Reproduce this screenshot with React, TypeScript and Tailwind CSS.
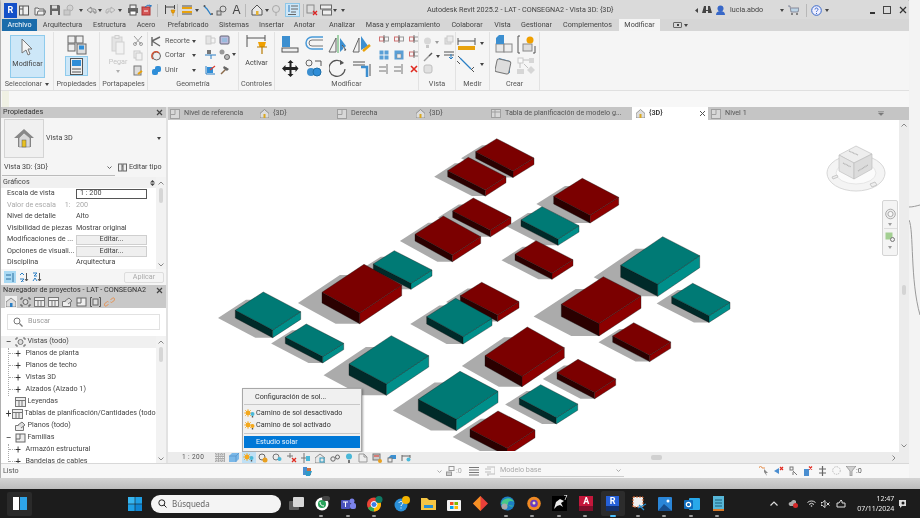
import React from "react";

type IcoProps = { w?: number; h?: number; vb?: string; c?: string; children?: React.ReactNode };

const Ico = ({ w = 12, h = 12, vb, c = "", children }: IcoProps) => (
  <svg width={w} height={h} viewBox={vb ?? `0 0 ${w} ${h}`} className={`shrink-0 ${c}`}>
    {children}
  </svg>
);

const Caret = ({ c = "" }: { c?: string }) => (
  <svg width="4" height="3" viewBox="0 0 4 3" className={`shrink-0 ${c}`}>
    <path d="M0 0h4L2 3z" fill="#444" />
  </svg>
);

const Sep = ({ c = "" }: { c?: string }) => <div className={`h-[13px] w-px shrink-0 bg-[#b8b8b8] ${c}`} />;

const TABS: [string, string][] = [
  ["Arquitectura", "w-[51px]"],
  ["Estructura", "w-[43px]"],
  ["Acero", "w-[30px]"],
  ["Prefabricado", "w-[54px]"],
  ["Sistemas", "w-[38px]"],
  ["Insertar", "w-[37px]"],
  ["Anotar", "w-[29px]"],
  ["Analizar", "w-[46px]"],
  ["Masa y emplazamiento", "w-[76px]"],
  ["Colaborar", "w-[52px]"],
  ["Vista", "w-[19px]"],
  ["Gestionar", "w-[49px]"],
  ["Complementos", "w-[53px]"],
];

const TitleBar = () => (
  <div className="flex h-[19px] shrink-0 items-center rounded-tr-[3px] bg-[#dadada] pl-[3px] pt-[1px]">
    <div className="flex h-[15px] w-[13px] shrink-0 items-center justify-center bg-[#1450c8] text-[9px] font-bold leading-none text-white">R</div>
    <Ico c="ml-[1px]" w={12} h={11} vb="0 0 12 11"><rect x="1.5" y="1" width="9" height="9" fill="#eee" stroke="#555" /><path d="M5 1v9M1.5 4h3.5" stroke="#555" /></Ico>
    <Ico c="ml-[4px]" w={12} h={11}><path d="M1 3h3l1 1h5v6H1z M3 10l1-4h8l-2 4" fill="#f0f0f0" stroke="#666" /></Ico>
    <Ico c="ml-[3px]" w={12} h={12}><path d="M1 1h9l1 1v9H1z" fill="#666" /><rect x="3" y="1.5" width="5" height="3" fill="#ddd" /><rect x="3" y="7" width="6" height="4" fill="#ddd" /></Ico>
    <Ico c="ml-[2px] opacity-50" w={13} h={12}><circle cx="7" cy="4" r="3" fill="#ccc" stroke="#888" /><rect x="1" y="6" width="6" height="5" fill="#bbb" stroke="#888" /></Ico>
    <Caret c="ml-[3px]" />
    <Ico c="ml-[3px]" w={11} h={9}><path d="M1 4l4-3v2h3a2 2 0 012 2v2H8V5H5v2z" fill="#ddd" stroke="#777" strokeWidth="0.8" /></Ico>
    <Caret c="ml-[1px]" />
    <Ico c="ml-[3px] opacity-50" w={11} h={9}><path d="M10 4L6 1v2H3a2 2 0 00-2 2v2h2V5h3v2z" fill="#ddd" stroke="#777" strokeWidth="0.8" /></Ico>
    <Caret c="ml-[2px]" />
    <Ico c="ml-[5px]" w={12} h={12}><rect x="3" y="1" width="6" height="4" fill="#eee" stroke="#555" /><rect x="1" y="4" width="10" height="5" fill="#666" /><rect x="3" y="7" width="6" height="4" fill="#fff" stroke="#555" /></Ico>
    <Ico c="ml-[2px]" w={12} h={12}><rect x="1" y="3" width="8" height="8" fill="#d65757" stroke="#a33" /><path d="M4 3l3-2 3 2M8 1l3 1" stroke="#2b79c2" fill="none" /><path d="M3 7h4" stroke="#fff" /></Ico>
    <Sep c="ml-[4px]" />
    <Ico c="ml-[6px]" w={12} h={13}><path d="M1.5 1v9M10.5 1v4M1.5 3h9" stroke="#444" fill="none" /><path d="M7 6h4l-1 3H8z M9 9v3" fill="#f0a000" stroke="#c78000" strokeWidth="0.6" /></Ico>
    <Sep c="ml-[1px]" />
    <Ico c="ml-[3px]" w={12} h={10}><rect x="1" y="2" width="10" height="2" fill="#e8a20c" /><rect x="1" y="6" width="10" height="2" fill="#e8a20c" /><path d="M1 1h10M1 9h10" stroke="#555" /></Ico>
    <Caret c="ml-[2px]" />
    <Ico c="ml-[4px]" w={11} h={12}><path d="M1 2l3 3 4 6" stroke="#2a7fc5" strokeWidth="1.3" fill="none" /><circle cx="1.5" cy="2" r="1" fill="#555" /><circle cx="9" cy="10" r="1" fill="#555" /></Ico>
    <Ico c="ml-[2px]" w={11} h={11}><circle cx="7" cy="4" r="3" fill="none" stroke="#666" /><rect x="1" y="6" width="4" height="4" fill="#ccc" stroke="#666" /></Ico>
    <div className="ml-[4px] w-[11px] text-center font-['Liberation_Sans',sans-serif] text-[12px] leading-none text-[#444]">A</div>
    <Sep c="ml-[3px]" />
    <Ico c="ml-[5px]" w={12} h={12}><path d="M1 6l5-5 5 5v5H1z" fill="#e8e8e8" stroke="#555" /><rect x="5" y="7" width="2.5" height="4" fill="#e4b232" /></Ico>
    <Caret c="ml-[2px]" />
    <Ico c="ml-[2px] opacity-50" w={10} h={12}><circle cx="5" cy="5" r="3.5" fill="none" stroke="#777" /><path d="M5 9v3" stroke="#777" /></Ico>
    <div className="ml-[4px] flex h-[14px] w-[15px] shrink-0 items-center justify-center border border-[#8ec7e8] bg-[#cde6f7]">
      <Ico w={11} h={10}><path d="M4 1h7M4 4h7M4 7h5M1 9.5h8" stroke="#666" /><path d="M2 0v7" stroke="#2a7fc5" /></Ico>
    </div>
    <Sep c="ml-[3px]" />
    <Ico c="ml-[2px]" w={12} h={12}><rect x="1" y="1" width="7" height="8" fill="#ddd" stroke="#888" /><path d="M7 7l4 4M11 7l-4 4" stroke="#d22" strokeWidth="1.3" /></Ico>
    <Ico c="ml-[2px]" w={12} h={12}><rect x="0.5" y="1" width="11" height="4" fill="#eee" stroke="#666" /><rect x="2.5" y="6" width="9" height="5" fill="#eee" stroke="#666" /></Ico>
    <Caret c="ml-[1px]" />
    <Caret c="ml-[4px]" />
    <div className="ml-[82px] w-[192px] shrink-0 whitespace-nowrap text-[7.2px] text-[#444]">Autodesk Revit 2025.2 - LAT - CONSEGNA2 - Vista 3D: {"{3D}"}</div>
    <Ico c="ml-[76px]" w={3} h={5}><path d="M3 0v5L0 2.5z" fill="#444" /></Ico>
    <Ico c="ml-[4px]" w={10} h={10}><path d="M2 1h2v4h2V1h2l2 7H6V6H4v2H0z" fill="#444" /></Ico>
    <Ico c="ml-[3px]" w={11} h={11}><circle cx="5.5" cy="3.5" r="3" fill="#3868c8" /><path d="M1 10c0-3 2-4 4.500-4s4.500 1 4.500 4z" fill="#3868c8" /></Ico>
    <div className="ml-[4px] w-[45px] shrink-0 text-[7.2px] text-[#444]">lucia.abdo</div>
    <Caret c="ml-[5px]" />
    <Ico c="ml-[4px]" w={11} h={10}><path d="M0 1h2l1 6h7l1-4H3" fill="#bcd4e6" stroke="#778" strokeWidth="0.8" /><circle cx="4" cy="9" r="1" fill="#666" /><circle cx="9" cy="9" r="1" fill="#666" /></Ico>
    <Sep c="ml-[7px]" />
    <Ico c="ml-[4px]" w={11} h={11}><circle cx="5.500" cy="5.500" r="4.800" fill="#eef" stroke="#3868c8" /><path d="M4 4.500c0-2 3-2 3 0 0 1-1.500 1-1.500 2.300M5.500 8v1" stroke="#3868c8" fill="none" /></Ico>
    <Caret c="ml-[3px]" />
    <div className="ml-[41px] mt-[6px] h-[1.5px] w-[5px] shrink-0 bg-[#333]" />
    <div className="ml-[8px] h-[8px] w-[8px] shrink-0 border border-[#444]" />
    <Ico c="ml-[8px]" w={8} h={8}><path d="M1 1l6 6M7 1L1 7" stroke="#333" strokeWidth="1.2" /></Ico>
  </div>
);

const RibbonTabs = () => (
  <div className="flex h-[12px] shrink-0 items-stretch bg-[#d6d6d6] text-[7.2px] text-[#444]">
    <div className="ml-[1px] flex w-[35px] items-center justify-center bg-[#1b6cab] pt-[1px] text-white">Archivo</div>
    {TABS.map(([t, w]) => (
      <div key={t} className={`flex items-center justify-center whitespace-nowrap pt-[1px] ${w}`}>{t}</div>
    ))}
    <div className="ml-[5px] flex w-[41px] items-center justify-center bg-[#f4f4f4] pt-[1px]">Modificar</div>
    <div className="ml-[13px] flex items-center gap-[2px]">
      <div className="flex h-[6px] w-[9px] items-center justify-center rounded-[1px] border border-[#666]"><div className="h-[2px] w-[2px] bg-[#444]" /></div>
      <Caret />
    </div>
  </div>
);

const Panel = ({ w, label, children }: { w: string; label: React.ReactNode; children?: React.ReactNode }) => (
  <div className={`flex shrink-0 flex-col border-r border-[#e2e2e2] ${w}`}>
    <div className="flex h-[47px] overflow-hidden">{children}</div>
    <div className="flex h-[11px] items-center justify-center text-[7.2px] text-[#555]">{label}</div>
  </div>
);

const RibbonRow = ({ icon, text, caret }: { icon: React.ReactNode; text: string; caret?: boolean }) => (
  <div className="flex h-[14.5px] items-center">
    {icon}
    <span className="ml-[3px] w-[27px] text-[7.2px] text-[#555]">{text}</span>
    {caret && <Caret />}
  </div>
);

const Mini = ({ kind }: { kind: string }) => {
  if (kind === "red") return <Ico w={10} h={10}><path d="M2 2l6 6M8 2L2 8" stroke="#e02a20" strokeWidth="1.6" /></Ico>;
  if (kind === "grid") return <Ico w={10} h={10}><rect x="0.5" y="0.5" width="4" height="4" fill="#5a9fd6" /><rect x="5.5" y="0.5" width="4" height="4" fill="#5a9fd6" /><rect x="0.5" y="5.5" width="4" height="4" fill="#5a9fd6" /><rect x="5.5" y="5.5" width="4" height="4" fill="#5a9fd6" /></Ico>;
  if (kind === "blue") return <Ico w={10} h={10}><rect x="0.5" y="0.5" width="9" height="9" fill="#5a9fd6" /><rect x="3" y="4" width="4" height="4" fill="#eee" stroke="#888" strokeWidth="0.5" /></Ico>;
  if (kind === "lines") return <Ico w={10} h={10}><path d="M0 3h7M0 7h7M8 0v10" stroke="#777" /></Ico>;
  return <Ico w={10} h={8}><rect x="0.5" y="2" width="4" height="4" fill="none" stroke="#d07070" /><rect x="5.5" y="2" width="4" height="4" fill="none" stroke="#999" /><path d="M5 0v8" stroke="#777" /></Ico>;
};

const Ribbon = () => (
  <div className="flex h-[59px] shrink-0 bg-[#f5f5f5] pt-[1px]">
    <Panel w="w-[53px]" label={<span className="flex items-center gap-[3px]">Seleccionar <Caret /></span>}>
      <div className="ml-[9px] mt-[3px] flex h-[43px] w-[35px] flex-col items-center border border-[#8fcbec] bg-[#cde7f8]">
        <Ico c="mt-[2px]" w={13} h={18}><path d="M1 1l10 10H7l2 5-2 1-2-5-4 3z" fill="#f4f4f4" stroke="#777" /></Ico>
        <span className="mt-[3px] text-[7.2px] text-[#444]">Modificar</span>
      </div>
    </Panel>
    <Panel w="w-[46px]" label="Propiedades">
      <div className="flex w-full flex-col items-center">
        <Ico c="mt-[3px]" w={20} h={20}><g fill="#eee" stroke="#666"><rect x="1" y="1" width="7" height="7" /><rect x="9" y="1" width="7" height="7" /><rect x="1" y="9" width="7" height="7" /></g><rect x="10" y="9" width="9" height="10" fill="#ddd" stroke="#666" /><rect x="12" y="10.5" width="5" height="4" fill="#2f8ed8" /></Ico>
        <div className="mt-[1px] flex h-[20px] w-[23px] items-center justify-center border border-[#8fcbec] bg-[#cde7f8]">
          <Ico w={13} h={17}><rect x="0.5" y="0.5" width="12" height="16" fill="#eee" stroke="#555" /><rect x="2" y="2" width="9" height="6" fill="#2f8ed8" /><path d="M2 11h9M2 14h9" stroke="#555" /></Ico>
        </div>
      </div>
    </Panel>
    <Panel w="w-[48px]" label="Portapapeles">
      <div className="ml-[7px] flex w-[22px] flex-col items-center opacity-40">
        <Ico c="mt-[3px]" w={14} h={20}><rect x="1" y="2" width="10" height="14" fill="#ccc" stroke="#999" /><rect x="4" y="0.5" width="4" height="3" fill="#ddd" stroke="#999" /><rect x="5" y="7" width="8" height="12" fill="#eee" stroke="#999" /></Ico>
        <span className="mt-[2px] text-[7.2px] text-[#777]">Pegar</span>
        <Caret c="mt-[2px]" />
      </div>
      <div className="ml-[4px] mt-[3px] flex flex-col items-center gap-[4px]">
        <Ico c="opacity-70" w={10} h={11}><path d="M1 1l7 8M9 1L2 9" stroke="#777" /><circle cx="2" cy="9" r="1.5" fill="none" stroke="#777" /><circle cx="8" cy="9" r="1.5" fill="none" stroke="#777" /></Ico>
        <Ico c="opacity-40" w={10} h={11}><rect x="1" y="1" width="6" height="7" fill="#eee" stroke="#888" /><rect x="3" y="3" width="6" height="7" fill="#eee" stroke="#888" /></Ico>
        <Ico w={10} h={11}><rect x="1" y="1" width="7" height="9" fill="#ddd" stroke="#777" /><path d="M5 9l4-3" stroke="#e8a20c" strokeWidth="2" /></Ico>
      </div>
    </Panel>
    <Panel w="w-[91px]" label="Geometría">
      <div className="ml-[3px] mt-[2px] flex w-[53px] shrink-0 flex-col">
        <RibbonRow caret text="Recorte" icon={<Ico w={11} h={11}><path d="M1 1v9M1 5l8-4M1 5l8 5" stroke="#666" strokeWidth="1.4" fill="none" /></Ico>} />
        <RibbonRow caret text="Cortar" icon={<Ico w={11} h={11}><circle cx="5.5" cy="6" r="4" fill="#eee" stroke="#666" /><path d="M2 9a4 4 0 016-6" stroke="#d45030" fill="none" strokeWidth="1.3" /></Ico>} />
        <RibbonRow caret text="Unir" icon={<Ico w={11} h={11}><rect x="4" y="1" width="6" height="6" rx="2" fill="#2f8ed8" /><rect x="1" y="4" width="6" height="6" rx="2" fill="#2f8ed8" /></Ico>} />
      </div>
      <div className="ml-[1px] mt-[3px] flex flex-col gap-[4px]">
        <Ico c="opacity-40" w={11} h={10}><rect x="1" y="1" width="5" height="8" fill="#ccc" stroke="#888" /><path d="M6 3h4v5H6" fill="none" stroke="#888" /></Ico>
        <Ico w={11} h={11}><rect x="2" y="1" width="4" height="4" fill="#777" /><path d="M0 6h11M6 6v4" stroke="#2a7fc5" /></Ico>
        <Ico w={11} h={11}><path d="M1 10V2M1 10h9" stroke="#2a7fc5" /><rect x="2" y="3" width="6" height="6" fill="#2f8ed8" /><path d="M5 6l5-4" stroke="#e04030" strokeWidth="1.3" /></Ico>
      </div>
      <div className="ml-[3px] mt-[3px] flex flex-col gap-[4px]">
        <Ico w={11} h={10}><rect x="1" y="1" width="9" height="8" rx="1" fill="#bbd" stroke="#667" /><rect x="3" y="3" width="5" height="4" fill="#9bd" /></Ico>
        <div className="flex items-center gap-[2px]"><Ico w={11} h={11}><circle cx="3" cy="3" r="2.5" fill="#999" /><circle cx="8" cy="8" r="2.5" fill="#bbb" stroke="#666" /></Ico><Caret /></div>
        <Ico w={11} h={11}><path d="M2 10l6-6" stroke="#8a6a4a" strokeWidth="1.5" /><path d="M5 2l5 3-2 2-4-3z" fill="#666" /></Ico>
      </div>
    </Panel>
    <Panel w="w-[36px]" label="Controles">
      <div className="flex w-full flex-col items-center">
        <Ico c="mt-[3px]" w={22} h={20}><path d="M1 0v12M19 0v6M1 3h18" stroke="#555" fill="none" /><path d="M12 7h8l-1.5 5h-5z" fill="#f0a000" /><path d="M11 12h10M16 12v7" stroke="#b87a00" strokeWidth="1.2" /></Ico>
        <span className="mt-[3px] text-[7.2px] text-[#444]">Activar</span>
      </div>
    </Panel>
    <Panel w="w-[144px]" label="Modificar">
      <div className="ml-[3px] mt-[3px] grid w-[96px] shrink-0 grid-cols-[24px_24px_24px_24px] grid-rows-[22px_22px]">
        <div className="flex justify-center"><Ico w={18} h={18}><rect x="1" y="1" width="8" height="11" fill="#3c8fd0" /><rect x="1" y="13" width="16" height="4" fill="#eee" stroke="#555" /></Ico></div>
        <div className="flex justify-center"><Ico w={20} h={16}><path d="M19 2H8a6 6 0 000 12h11" fill="none" stroke="#4a9ad8" strokeWidth="1.5" /><path d="M19 5H8a3 3 0 000 6h11" fill="none" stroke="#777" /></Ico></div>
        <div className="flex justify-center"><Ico w={20} h={18}><path d="M8 3v14H1z" fill="#f2f2f2" stroke="#666" /><path d="M10 0v18" stroke="#4fae5f" /><path d="M12 3v14l6-6z" fill="#3c8fd0" /><path d="M14 10l4 5-2 0" stroke="#555" fill="#eee" /></Ico></div>
        <div className="flex justify-center"><Ico w={20} h={18}><path d="M7 3v14H1z" fill="#f2f2f2" stroke="#666" /><path d="M9 1v14l7-4z" fill="#3c8fd0" /><path d="M11 16l7-6" stroke="#e8a20c" strokeWidth="2.5" /></Ico></div>
        <div className="flex items-center justify-center"><Ico w={17} h={17}><path d="M8.500 0l3 3h-2v4h4V5l3 3.500-3 3.500v-2h-4v4h2l-3 3-3-3h2v-4h-4v2L0 8.500l3.500-3.500v2h4V3h-2z" fill="#222" /></Ico></div>
        <div className="flex items-center justify-center"><Ico w={18} h={18}><circle cx="4" cy="4" r="3" fill="#f2f2f2" stroke="#666" /><path d="M10 2h6M16 2v5" stroke="#555" fill="none" /><circle cx="6" cy="13" r="4" fill="#3c8fd0" /><circle cx="12" cy="13" r="4" fill="#2f8ed8" stroke="#1f6fa8" /></Ico></div>
        <div className="flex items-center justify-center"><Ico w={18} h={18}><path d="M14 4A8 8 0 1016 10" fill="none" stroke="#555" strokeWidth="1.2" /><path d="M11 1l4 3-4 2" fill="#555" /></Ico></div>
        <div className="flex items-center justify-center"><Ico w={20} h={18}><path d="M1 3h12M1 6h12" stroke="#555" /><path d="M9 8h6v10" stroke="#3c8fd0" strokeWidth="2.500" fill="none" /><path d="M18 5v12" stroke="#555" /></Ico></div>
      </div>
      <div className="ml-[2px] mt-[3px] grid grid-cols-[15px_15px_15px] grid-rows-[14.5px_14.5px_14.5px] justify-items-center">
        <Mini kind="pair" /><Mini kind="pair" /><Mini kind="pair" />
        <Mini kind="grid" /><Mini kind="blue" /><Mini kind="pair" />
        <Mini kind="lines" /><Mini kind="lines" /><Mini kind="red" />
      </div>
    </Panel>
    <Panel w="w-[37px]" label="Vista">
      <div className="ml-[4px] mt-[3px] grid grid-cols-[21px_10px] grid-rows-[14.5px_14.5px_14.5px]">
        <div className="flex items-center gap-[3px] opacity-50"><Ico w={9} h={11}><circle cx="4.500" cy="4" r="3.500" fill="#bbb" /><rect x="3" y="8" width="3" height="3" fill="#999" /></Ico><Caret /></div>
        <Ico c="opacity-40" w={10} h={10}><rect x="1" y="3" width="6" height="6" fill="#ccc" stroke="#888" /><rect x="3" y="1" width="6" height="6" fill="#ddd" stroke="#888" /></Ico>
        <div className="flex items-center gap-[3px]"><Ico w={10} h={10}><path d="M1 9l5-5" stroke="#999" strokeWidth="1.500" /><path d="M6 4l3-3" stroke="#555" strokeWidth="1.500" /></Ico><Caret /></div>
        <Ico w={10} h={10}><path d="M0 2h10M0 5h10" stroke="#555" /><path d="M7 4v5M5 7l2 2 2-2" stroke="#2a7fc5" fill="none" /></Ico>
        <Ico c="opacity-50" w={10} h={10}><rect x="1" y="1" width="8" height="8" rx="2" fill="#ccc" stroke="#888" /></Ico>
      </div>
    </Panel>
    <Panel w="w-[34px]" label="Medir">
      <div className="mt-[3px] flex flex-col gap-[3px] pl-[1px]">
        <div className="flex items-center gap-[4px]"><Ico w={19} h={17}><path d="M1 3v7M18 3v7M1 6h17" stroke="#555" /><rect x="1" y="11" width="17" height="4" fill="#e8a20c" /></Ico><Caret /></div>
        <div className="flex items-center gap-[4px]"><Ico w={19} h={18}><path d="M1 1l8 8 8 8" stroke="#555" /><path d="M3 3l11 11" stroke="#2a7fc5" strokeWidth="1.200" /><path d="M3 9L0 6M17 12l-3 3" stroke="#555" /></Ico><Caret /></div>
      </div>
    </Panel>
    <Panel w="w-[50px]" label="Crear">
      <div className="ml-[3px] mt-[3px] grid grid-cols-[23px_20px] grid-rows-[22px_22px] justify-items-center">
        <Ico w={19} h={18}><rect x="1" y="9" width="8" height="8" fill="#e8e8e8" stroke="#888" /><rect x="9" y="9" width="8" height="8" fill="#eee" stroke="#888" /><path d="M1 9V3l3-3h5v9z" fill="#3c8fd0" /></Ico>
        <Ico w={19} h={19}><path d="M3 1H1v17h2M16 18h2v-7" stroke="#555" fill="none" /><rect x="6" y="9" width="9" height="7" fill="#ddd" stroke="#888" /><circle cx="13" cy="5" r="3.500" fill="#f0a000" /></Ico>
        <Ico w={20} h={18}><path d="M4 1l11 3v12L4 13z" fill="#3c8fd0" /><rect x="1" y="3" width="14" height="13" rx="2" fill="#ddd" stroke="#777" transform="rotate(12 8 9)" /></Ico>
        <Ico c="opacity-40" w={18} h={18}><rect x="1" y="1" width="5" height="5" fill="#fff" stroke="#888" /><rect x="12" y="1" width="5" height="5" fill="#aaa" /><path d="M6 3h6M3 6v5M7 7l4 4" stroke="#777" /><rect x="0" y="12" width="7" height="5" fill="#aaa" /><path d="M14 9l4 4-4 4-4-4z" fill="#aaa" /></Ico>
      </div>
    </Panel>
  </div>
);

const OptionsBar = () => (
  <div className="flex h-[17px] shrink-0 border-t border-[#e0e0e0] bg-[#f7f7f7]">
    <div className="ml-[1px] h-full w-[7px] bg-[#f0f1e4]" />
  </div>
);

const PropRow = ({ l, v, c = "" }: { l: string; v: React.ReactNode; c?: string }) => (
  <div className={`flex h-[11.5px] items-center ${c}`}>
    <div className="w-[75px] shrink-0 whitespace-pre pl-[6px]">{l}</div>
    <div className="flex-1">{v}</div>
  </div>
);

const EditBtn = () => (
  <div className="flex h-[10.5px] w-[71px] items-center justify-center border border-[#cfcfcf] bg-[#efefef]">Editar...</div>
);

const PanelHead = ({ t }: { t: string }) => (
  <div className="flex h-[11px] shrink-0 items-center justify-between bg-[#c8c8c8] pl-[2px] pr-[3px] text-[7.2px] text-[#333]">
    <span className="whitespace-nowrap">{t}</span>
    <Ico w={7} h={7}><path d="M1 1l5 5M6 1L1 6" stroke="#444" strokeWidth="1.200" /></Ico>
  </div>
);

const VScroll = ({ thumb }: { thumb: string }) => (
  <div className="flex w-[10px] shrink-0 flex-col items-center bg-[#f2f2f2] pt-[4px]">
    <Ico w={6} h={4}><path d="M0.500 3.500L3 1l2.500 2.500" stroke="#888" fill="none" /></Ico>
    <div className={`mt-[3px] w-[4px] rounded-[2px] bg-[#d6d6d6] ${thumb}`} />
    <Ico c="mb-[2px] mt-auto" w={6} h={4}><path d="M0.500 0.500L3 3l2.500-2.500" stroke="#888" fill="none" /></Ico>
  </div>
);

const Properties = () => (
  <div className="flex h-[178px] shrink-0 flex-col bg-[#f5f5f5] text-[7.2px] text-[#444]">
    <PanelHead t="Propiedades" />
    <div className="flex h-[40px] shrink-0 items-center">
      <div className="ml-[3px] flex h-[39px] w-[40px] items-center justify-center border border-[#d4d4d4] bg-[#f0f0f0]">
        <Ico w={22} h={22}><path d="M1 11L11 2l10 9-3 0v9H5v-9z" fill="#888" /><path d="M6 11l5-5 6 5v9H6z" fill="#d8d8d8" stroke="#777" strokeWidth="0.500" /><rect x="9" y="13" width="4" height="7" fill="#e8c020" stroke="#555" strokeWidth="0.500" /></Ico>
      </div>
      <span className="ml-[2px] flex-1">Vista 3D</span>
      <Caret c="mr-[5px]" />
    </div>
    <div className="flex h-[19px] shrink-0 items-center">
      <div className="ml-[1px] mt-[1px] flex h-[15px] w-[113px] items-center justify-between border-b border-[#bbb] pl-[2px] pr-[3px]">
        <span>Vista 3D: {"{3D}"}</span>
        <Ico w={5} h={3}><path d="M0.500 0.500L2.500 2.500l2-2" stroke="#666" fill="none" /></Ico>
      </div>
      <Ico c="ml-[3px]" w={9} h={9}><rect x="0.500" y="1" width="3.500" height="7" fill="#eee" stroke="#666" /><rect x="5" y="1" width="3.500" height="7" fill="#eee" stroke="#666" /><path d="M4 3h1" stroke="#666" /></Ico>
      <span className="ml-[2px] whitespace-nowrap">Editar tipo</span>
    </div>
    <div className="flex min-h-0 flex-1">
      <div className="min-w-0 flex-1 bg-white">
        <div className="flex h-[11px] items-center justify-between bg-[#f0f0f0] pl-[2px] pr-[1px]">
          <span>Gráficos</span>
          <Ico w={5} h={6}><path d="M0 2.500L2.500 0 5 2.500zM0 3.500L2.500 6 5 3.500z" fill="#444" /></Ico>
        </div>
        <PropRow l="Escala de vista" v={<div className="flex h-[10.500px] w-[71px] items-center border border-[#555] pl-[3px]">1 : 200</div>} />
        <PropRow c="text-[#aaa]" l="Valor de escala     1:" v="200" />
        <PropRow l="Nivel de detalle" v="Alto" />
        <PropRow l="Visibilidad de piezas" v="Mostrar original" />
        <PropRow l="Modificaciones de ..." v={<EditBtn />} />
        <PropRow l="Opciones de visuali..." v={<EditBtn />} />
        <PropRow l="Disciplina" v="Arquitectura" />
      </div>
      <VScroll thumb="h-[15px]" />
    </div>
    <div className="flex h-[16px] shrink-0 items-center pl-[3px]">
      <div className="flex h-[12px] w-[12px] items-center justify-center bg-[#a9d9f3]"><Ico w={9} h={9}><path d="M0 2h5M0 6h5" stroke="#2a6f9f" /><path d="M7 0v9" stroke="#2a6f9f" /></Ico></div>
      <Ico c="ml-[3px]" w={10} h={10}><path d="M7.500 1v8M6 7l1.500 2L9 7" stroke="#555" fill="none" /><path d="M1 3l2-2 2 2M1 7h4l-3 3h3" stroke="#2a7fc5" fill="none" /></Ico>
      <Ico c="ml-[3px]" w={10} h={10}><path d="M7.500 1v8M6 7l1.500 2L9 7" stroke="#555" fill="none" /><path d="M1 1h4L2 4h3M1 9l2-3 2 3" stroke="#2a7fc5" fill="none" /></Ico>
      <div className="ml-auto mr-[2px] flex h-[11px] w-[40px] items-center justify-center rounded-[2px] border border-[#ddd] text-[#aaa]">Aplicar</div>
    </div>
  </div>
);

const TreeRow = ({ t, icon, sign, indent = "pl-[15px]", hi }: { t: string; icon?: React.ReactNode; sign?: string; indent?: string; hi?: boolean }) => (
  <div className={`flex h-[12px] shrink-0 items-center whitespace-nowrap ${indent} ${hi ? "bg-[#f0f0f0]" : ""}`}>
    {sign && <span className="w-[7px] shrink-0 text-center text-[10px] leading-none text-[#333]">{sign}</span>}
    {icon}
    <span className="ml-[1.5px]">{t}</span>
  </div>
);

// dotted guide of the tree: the children hang on a vertical line with a tick per row
const TreeChild = ({ t }: { t: string }) => (
  <div className="flex h-[12px] shrink-0 items-center whitespace-nowrap">
    <div className="h-0 w-[6px] shrink-0 border-t border-dotted border-[#aaa]" />
    <span className="w-[7px] shrink-0 text-center text-[10px] leading-none text-[#333]">+</span>
    <span className="ml-[4px]">{t}</span>
  </div>
);

const SheetIco = ({ c = "#777" }: { c?: string }) => (
  <Ico w={11} h={10}><rect x="0.500" y="0.500" width="10" height="9" fill="#eee" stroke={c} /><path d="M0.500 3.500h10M4 3.500v6M7 3.500v6" stroke={c} /></Ico>
);

const Browser = () => (
  <div className="flex min-h-0 flex-1 flex-col bg-white text-[7.2px] text-[#444]">
    <PanelHead t="Navegador de proyectos - LAT - CONSEGNA2" />
    <div className="flex h-[12px] shrink-0 items-center gap-[3px] bg-[#c8c8c8] pl-[4px]">
      <div className="flex h-[12px] w-[12px] items-center justify-center bg-[#efefef]"><Ico w={10} h={10}><path d="M0 5l5-4 5 4v5H0z" fill="#ddd" stroke="#666" strokeWidth="0.700" /><rect x="4" y="6" width="2.500" height="4" fill="#2a7fc5" /></Ico></div>
      <Ico w={11} h={10}><path d="M1 3V1h2M8 1h2v2M10 7v2H8M3 9H1V7" stroke="#555" fill="none" /><circle cx="5.500" cy="5" r="2.500" fill="#ddd" stroke="#666" /></Ico>
      <SheetIco /><SheetIco />
      <Ico w={11} h={10}><path d="M0.500 4.500h8v5h-8z" fill="#eee" stroke="#777" /><path d="M3 4l4-3 3 3-4 3" fill="#ddd" stroke="#777" /></Ico>
      <Ico w={11} h={10}><rect x="1" y="1" width="9" height="8" fill="#eee" stroke="#666" /><path d="M5 1v5H1" stroke="#666" fill="none" /></Ico>
      <Ico w={11} h={10}><path d="M2 .500H.500v9H2M9 .500h1.500v9H9" stroke="#555" fill="none" /><rect x="3" y="2" width="5" height="6" fill="#ddd" stroke="#666" /></Ico>
      <Ico w={11} h={10}><path d="M4.500 7l-2 2a1.500 1.500 0 01-2-2l2-2a1.500 1.500 0 012 0M6.500 3l2-2a1.500 1.500 0 012 2l-2 2a1.500 1.500 0 01-2 0" stroke="#e59050" fill="none" /></Ico>
    </div>
    <div className="flex h-[27.500px] shrink-0 items-center px-[6px]">
      <div className="flex h-[16px] flex-1 items-center border border-[#e2e2e2] pl-[5px]">
        <Ico w={10} h={10}><circle cx="4" cy="4" r="3" fill="none" stroke="#777" /><path d="M6.500 6.500L9.500 9.500" stroke="#777" strokeWidth="1.200" /></Ico>
        <span className="ml-[5px] text-[#9a9a9a]">Buscar</span>
      </div>
    </div>
    <div className="flex min-h-0 flex-1">
      <div className="min-w-0 flex-1 overflow-hidden">
        <TreeRow hi indent="pl-[4px]" sign="−" t="Vistas (todo)" icon={<Ico c="ml-[3px]" w={11} h={10}><path d="M1 3V1h2M8 1h2v2M10 7v2H8M3 9H1V7" stroke="#666" fill="none" /><circle cx="5.500" cy="5" r="2.500" fill="#ddd" stroke="#777" /></Ico>} />
        <div className="ml-[6.500px] border-l border-dotted border-[#aaa]">
          <TreeChild t="Planos de planta" />
          <TreeChild t="Planos de techo" />
          <TreeChild t="Vistas 3D" />
          <TreeChild t="Alzados (Alzado 1)" />
        </div>
        <TreeRow indent="pl-[14px]" t="Leyendas" icon={<SheetIco />} />
        <TreeRow indent="pl-[4px]" sign="+" t="Tablas de planificación/Cantidades (todo" icon={<SheetIco />} />
        <TreeRow indent="pl-[14px]" t="Planos (todo)" icon={<Ico w={11} h={10}><path d="M0.500 4.500h8v5h-8z" fill="#eee" stroke="#777" /><path d="M3 4l4-3 3 3-4 3" fill="#ddd" stroke="#777" /></Ico>} />
        <TreeRow indent="pl-[4px]" sign="−" t="Familias" icon={<Ico c="ml-[3px]" w={11} h={10}><rect x="1" y="1" width="9" height="8" fill="#eee" stroke="#666" /><path d="M5 1v5H1" stroke="#666" fill="none" /></Ico>} />
        <div className="ml-[6.500px] border-l border-dotted border-[#aaa]">
          <TreeChild t="Armazón estructural" />
          <TreeChild t="Bandejas de cables" />
        </div>
      </div>
      <VScroll thumb="h-[15px]" />
    </div>
  </div>
);

type Box = { k: "r" | "t"; a: number[]; r: number[]; l: number[]; h: number };

const BOXES: Box[] = [
  { k: "r", a: [496.7, 138.7], r: [534, 158], l: [475.7, 151.7], h: 6.5 },
  { k: "r", a: [468.3, 157.3], r: [506, 176.7], l: [447.7, 170.7], h: 6 },
  { k: "r", a: [473.3, 198], r: [511, 217.3], l: [452.7, 211], h: 6.5 },
  { k: "r", a: [443.3, 216], r: [480.7, 236.7], l: [415, 234.3], h: 6.7 },
  { k: "t", a: [394.3, 250.7], r: [432, 270], l: [373.3, 264], h: 6 },
  { k: "r", a: [364, 264.3], r: [401.7, 285], l: [322, 292.3], h: 10.7 },
  { k: "t", a: [263.3, 292], r: [300.7, 311.7], l: [235.3, 310.3], h: 7.7 },
  { k: "t", a: [306.3, 324], r: [343.7, 343.3], l: [285.3, 337.3], h: 6.3 },
  { k: "r", a: [481.7, 282.3], r: [519, 301.7], l: [460.3, 295.7], h: 6.3 },
  { k: "t", a: [455.7, 298.3], r: [492, 318.3], l: [426.7, 316.7], h: 7.3 },
  { k: "t", a: [391.3, 335.7], r: [428.7, 355.7], l: [349, 364], h: 11.3 },
  { k: "r", a: [527.3, 327], r: [564.3, 347.7], l: [485, 355.7], h: 10.3 },
  { k: "t", a: [460, 371.3], r: [498, 391.3], l: [418.3, 399.3], h: 11.3 },
  { k: "t", a: [540.7, 384.7], r: [577.7, 404], l: [519.3, 398.3], h: 6.3 },
  { k: "r", a: [498, 411], r: [535, 430], l: [470, 429.3], h: 7.7 },
  { k: "r", a: [578, 359.3], r: [615.7, 379], l: [557, 372.7], h: 6.3 },
  { k: "r", a: [603.3, 276.7], r: [641, 296], l: [561.3, 304.3], h: 12.3 },
  { k: "t", a: [662.7, 236.7], r: [699.7, 255.7], l: [620.7, 265.3], h: 12 },
  { k: "t", a: [692.7, 283.3], r: [730, 302.3], l: [671.7, 296.7], h: 6.7 },
  { k: "r", a: [633.7, 322.7], r: [670.7, 342], l: [612.7, 336], h: 6.3 },
  { k: "r", a: [582.3, 178.3], r: [618.7, 197.3], l: [553.7, 196.3], h: 7.7 },
  { k: "t", a: [542, 206.7], r: [579, 225.7], l: [521, 220], h: 6.3 },
  { k: "r", a: [536, 240.7], r: [573, 259.7], l: [515, 254.3], h: 6 },
];

const COL = {
  r: { top: "#7b0000", right: "#8c0000", left: "#2b0000" },
  t: { top: "#007a75", right: "#008f8a", left: "#002a29" },
};

const pts = (...p: number[][]) => p.map((q) => q.join(",")).join(" ");

const Model = () => (
  <svg width={731} height={331} viewBox="168 120 731 331" className="block">
    {BOXES.map((b, i) => {
      const f = [b.r[0] + b.l[0] - b.a[0], b.r[1] + b.l[1] - b.a[1]];
      const dx = -2.25 * b.h;
      const low = (q: number[]) => [q[0], q[1] + b.h];
      const sh = (q: number[]) => [q[0] + dx, q[1] + b.h];
      return <polygon key={i} points={pts(low(b.a), sh(b.a), sh(b.l), sh(f), low(f))} fill="#ababab" />;
    })}
    {BOXES.map((b, i) => {
      const f = [b.r[0] + b.l[0] - b.a[0], b.r[1] + b.l[1] - b.a[1]];
      const low = (q: number[]) => [q[0], q[1] + b.h];
      const c = COL[b.k];
      return (
        <g key={i} stroke="#111" strokeWidth="0.35" strokeLinejoin="round">
          <polygon points={pts(b.l, f, low(f), low(b.l))} fill={c.left} />
          <polygon points={pts(b.r, f, low(f), low(b.r))} fill={c.right} />
          <polygon points={pts(b.a, b.r, f, b.l)} fill={c.top} />
        </g>
      );
    })}
  </svg>
);

const ViewCube = () => (
  <svg width={64} height={48} viewBox="0 0 64 48" className="absolute right-[11px] top-[25px]">
    <ellipse cx="32" cy="28" rx="29" ry="18" fill="#f4f4f4" stroke="#d8d8d8" />
    <ellipse cx="32" cy="28" rx="20" ry="11" fill="#fbfbfb" stroke="#e6e6e6" />
    <path d="M8 32l5-2 1 2-5 2zM46 39l5-2 2 3-5 2z" fill="#eee" stroke="#c8c8c8" />
    <path d="M32 1l16 8-18 9-15-8z" fill="#eee" stroke="#bbb" strokeWidth="0.600" />
    <path d="M15 10l15 8v16l-15-8z" fill="#e4e4e4" stroke="#bbb" strokeWidth="0.600" />
    <path d="M30 18l18-9v15l-18 10z" fill="#dcdcdc" stroke="#bbb" strokeWidth="0.600" />
    <path d="M25 6l9 4M19 18l8 4M34 26l10-6" stroke="#b0b0b0" strokeWidth="1.200" strokeDasharray="1 0.500" />
  </svg>
);

const NavBar = () => (
  <div className="absolute right-[1px] top-[80px] flex h-[56px] w-[16px] flex-col items-center rounded-[2px] border border-[#d4d4d4] bg-[#f4f4f4] pt-[7px]">
    <Ico w={11} h={12}><circle cx="5.500" cy="6" r="4.800" fill="#eee" stroke="#aaa" /><circle cx="5.500" cy="6" r="2.600" fill="#f8f8f8" stroke="#aaa" /></Ico>
    <Caret c="mt-[3px] opacity-50" />
    <div className="mt-[2px] h-px w-[13px] bg-[#ddd]" />
    <Ico c="mt-[3px]" w={11} h={11}><rect x="0.500" y="0.500" width="7" height="7" fill="#a3cf92" /><circle cx="7.500" cy="7.500" r="2" fill="#eee" stroke="#777" /></Ico>
    <Caret c="mt-[3px] opacity-50" />
  </div>
);

const ViewBarIcon = ({ children, active }: { children: React.ReactNode; active?: boolean }) => (
  <div className={`flex h-[11px] w-[14.300px] shrink-0 items-center justify-center ${active ? "bg-[#bfe0f5]" : ""}`}>{children}</div>
);

const SunBulb = ({ bulb = "#4ab8d8" }: { bulb?: string }) => (
  <Ico w={11} h={9}><path d="M4 0v8M0 4h8M1 1l6 6M7 1L1 7" stroke="#f4a81c" strokeWidth="0.700" /><circle cx="4" cy="4" r="2.400" fill="#f4a81c" /><circle cx="8.500" cy="5" r="2" fill={bulb} /><rect x="7.800" y="7" width="1.400" height="1.500" fill="#555" /></Ico>
);

const ViewBar = () => (
  <div className="flex h-[11px] shrink-0 items-center bg-[#ececec] text-[6.5px] text-[#555]">
    <div className="ml-[14px] w-[31px] shrink-0 tracking-[0.4px]">1 : 200</div>
    <div className="flex">
      <ViewBarIcon><Ico w={10} h={9}><rect width="10" height="9" fill="#aaa" /><path d="M0 2h10M0 4.500h10M0 7h10M2 0v9M5 0v9M8 0v9" stroke="#eee" strokeDasharray="1 1" /></Ico></ViewBarIcon>
      <ViewBarIcon><Ico w={10} h={9}><path d="M0 3l3-3h7v6l-3 3H0z" fill="#7ab8e8" /><path d="M0 3h7v6M7 3l3-3" stroke="#4a88c0" fill="none" strokeWidth="0.600" /></Ico></ViewBarIcon>
      <ViewBarIcon active><SunBulb /></ViewBarIcon>
      <ViewBarIcon><Ico w={10} h={10}><circle cx="4" cy="4" r="3" fill="#eee" stroke="#666" /><circle cx="7" cy="7" r="2.500" fill="#e8a020" /></Ico></ViewBarIcon>
      <ViewBarIcon><Ico w={10} h={10}><circle cx="4" cy="4" r="3" fill="none" stroke="#777" /><circle cx="7.500" cy="6" r="2" fill="#4ab8d8" /></Ico></ViewBarIcon>
      <ViewBarIcon><Ico w={10} h={10}><path d="M3 0v5M0 3h6" stroke="#777" /><path d="M5 5l4 4M9 5L5 9" stroke="#e02a20" strokeWidth="1.300" /></Ico></ViewBarIcon>
      <ViewBarIcon><Ico w={10} h={10}><path d="M3 0v10M0 5h6" stroke="#777" /><rect x="5" y="3" width="4" height="5" fill="#4ab8d8" /></Ico></ViewBarIcon>
      <ViewBarIcon><Ico w={10} h={10}><path d="M0 5l5-4 5 4v5H0z" fill="#e8e8e8" stroke="#666" strokeWidth="0.700" /><rect x="5" y="5" width="4" height="4" fill="none" stroke="#2a9ac0" /></Ico></ViewBarIcon>
      <ViewBarIcon><Ico w={10} h={8}><ellipse cx="3" cy="5" rx="2.200" ry="2.200" fill="none" stroke="#666" /><ellipse cx="7.500" cy="3" rx="2" ry="2" fill="none" stroke="#666" /></Ico></ViewBarIcon>
      <ViewBarIcon><Ico w={8} h={10}><circle cx="4" cy="3.500" r="3" fill="#4ab8d8" /><rect x="3" y="7" width="2" height="3" fill="#777" /></Ico></ViewBarIcon>
      <ViewBarIcon><Ico w={10} h={10}><path d="M1 1h5l3 3v5H1z" fill="#eee" stroke="#999" /><path d="M6 1v3h3" stroke="#999" fill="none" /></Ico></ViewBarIcon>
      <ViewBarIcon><Ico w={10} h={10}><rect x="1" y="1" width="7" height="6" fill="#ccc" stroke="#777" /><path d="M2 3h5" stroke="#e02a20" /><circle cx="8" cy="8" r="2" fill="#e8a020" /></Ico></ViewBarIcon>
      <ViewBarIcon><Ico w={10} h={10}><path d="M1 5l3-3h5v4H5z" fill="#3c8fd0" /><rect x="1" y="5" width="4" height="4" fill="#eee" stroke="#777" /></Ico></ViewBarIcon>
      <ViewBarIcon><Ico w={10} h={10}><path d="M1 2v6M9 2v3M1 3h8" stroke="#666" fill="none" /><circle cx="7.500" cy="6.500" r="2" fill="#4ab8d8" /></Ico></ViewBarIcon>
    </div>
    <div className="flex flex-1 items-center justify-end">
      <div className="mr-[230px] h-[5px] w-[11px] rounded-[2px] bg-[#d0d0d0]" />
      <Ico c="mr-[3px]" w={4} h={6}><path d="M.500 .500L3 3 .500 5.500" stroke="#888" fill="none" /></Ico>
    </div>
  </div>
);

const DocTab = ({ w, icon, t, c = "" }: { w: string; icon?: React.ReactNode; t: string; c?: string }) => (
  <div className={`flex h-full shrink-0 items-center gap-[4px] whitespace-nowrap ${w} ${c}`}>
    {icon}
    <span>{t}</span>
  </div>
);

const TabHouse = () => <Ico w={9} h={9}><path d="M0 4.500L4.500 .500 9 4.500V9H0z" fill="#ddd" stroke="#777" strokeWidth="0.700" /><rect x="3.500" y="5" width="2" height="4" fill="#d9a820" /></Ico>;
const TabDoc = () => <Ico w={10} h={10}><rect x=".500" y=".500" width="9" height="9" fill="#d8d8d8" stroke="#a0a0a0" /><path d="M5 .500v5H.500" stroke="#a0a0a0" fill="none" /></Ico>;

const DocTabs = () => (
  <div className="flex h-[13px] shrink-0 items-center bg-[#c5c5c5] pl-[2px] text-[7.2px] text-[#555]">
    <DocTab w="w-[90px]" icon={<TabDoc />} t="Nivel de referencia" />
    <DocTab w="w-[77px]" icon={<TabHouse />} t="{3D}" />
    <DocTab w="w-[79px]" icon={<TabDoc />} t="Derecha" />
    <DocTab w="w-[75px]" icon={<TabHouse />} t="{3D}" />
    <DocTab w="w-[141px]" icon={<Ico w={10} h={9}><rect x=".500" y=".500" width="9" height="8" fill="#d8d8d8" stroke="#a0a0a0" /><path d="M.500 3h9M4 .500v8" stroke="#a0a0a0" /></Ico>} t="Tabla de planificación de modelo g..." />
    <div className="flex h-full w-[76px] shrink-0 items-center justify-between bg-white pl-[4px] pr-[2px] text-[#333]">
      <div className="flex items-center gap-[4px]"><TabHouse /><span className="font-semibold">{"{3D}"}</span></div>
      <Ico w={7} h={7}><path d="M1 1l5 5M6 1L1 6" stroke="#555" /></Ico>
    </div>
    <DocTab w="w-[170px]" c="pl-[3px]" icon={<TabDoc />} t="Nivel 1" />
    <Ico w={6} h={5}><path d="M0 .500h6M.500 2l2.500 2.500L5.500 2z" stroke="#777" fill="#777" strokeWidth="0.500" /></Ico>
  </div>
);

const SunMenu = () => (
  <div className="absolute left-[74px] top-[268px] z-10 flex h-[64px] w-[120px] flex-col border border-[#a8a8a8] bg-[#f0f0f0] p-[1px] text-[7.2px] text-[#333] shadow-[1px_1px_2px_rgba(0,0,0,0.35)]">
    <div className="flex h-[14px] shrink-0 items-center pl-[11px]">Configuración de sol...</div>
    <div className="h-px shrink-0 bg-[#c8c8c8]" />
    <div className="mt-[3px] flex h-[11.500px] shrink-0 items-center"><SunBulb /><span className="ml-[1px]">Camino de sol desactivado</span></div>
    <div className="flex h-[11.500px] shrink-0 items-center"><SunBulb bulb="#f4a81c" /><span className="ml-[1px]">Camino de sol activado</span></div>
    <div className="mt-[2px] h-px shrink-0 bg-[#c8c8c8]" />
    <div className="mt-[2px] flex h-[12px] shrink-0 items-center bg-[#0078d7] pl-[12px] text-[#eef6fd]">Estudio solar</div>
  </div>
);

const StatusBar = () => (
  <div className="flex h-[15px] shrink-0 items-center border-t border-[#d8d8d8] bg-[#f7f7f7] pl-[2px] text-[7.2px] text-[#555]">
    <span className="w-[299px] shrink-0">Listo</span>
    <Ico w={11} h={11}><rect x="1" y="1" width="4" height="8" fill="#4a8ed0" /><rect x="5" y="2" width="4" height="7" fill="#d07040" /><path d="M3 5h7l-2 5H4z" fill="#2f9ac8" /></Ico>
    <Ico c="ml-[124px]" w={5} h={3}><path d="M.500 .500L2.500 2.500l2-2" stroke="#aaa" fill="none" /></Ico>
    <Ico c="ml-[4px]" w={9} h={10}><rect x="3" y="0.500" width="5" height="4" fill="none" stroke="#999" /><rect x="0.500" y="6" width="5" height="3.500" fill="#ccc" stroke="#999" /></Ico>
    <span className="ml-[1px] w-[13px] text-[#aaa]">:0</span>
    <Ico w={10} h={9}><path d="M0 .500h10M0 3h10M0 5.500h10M0 8h10" stroke="#777" /></Ico>
    <Ico c="ml-[6px] opacity-60" w={10} h={10}><path d="M2 1h8v7H2M0 3h6M0 6h6M3 8v2" stroke="#999" fill="none" /></Ico>
    <div className="ml-[5px] flex w-[124px] shrink-0 items-center justify-between border-b border-[#cfcfcf] pr-[3px] text-[#aaa]">
      <span>Modelo base</span>
      <Ico w={5} h={3}><path d="M.500 .500L2.500 2.500l2-2" stroke="#aaa" fill="none" /></Ico>
    </div>
    <div className="ml-[135px] flex shrink-0 items-center gap-[5px]">
      <Ico w={10} h={10}><path d="M0 2a1.500 1.500 0 013 0M3 2h3" stroke="#e59050" fill="none" /><path d="M5 3l4 4-2 0 1 3-3-4z" fill="#888" /></Ico>
      <Ico w={10} h={10}><path d="M0 5l5-3v6z" fill="#4a8ed0" /><path d="M6 1l3 3M9 1L6 4" stroke="#e02a20" strokeWidth="1.200" /></Ico>
      <Ico w={9} h={10}><rect x="1" y="1" width="3" height="3" fill="none" stroke="#777" /><path d="M4 5l4 4M4 6v3" stroke="#777" /></Ico>
      <Ico w={10} h={10}><rect x="1" y="3" width="5" height="7" fill="#4a8ed0" /><path d="M6 0.500l3 3M9 0.500l-3 3" stroke="#e02a20" strokeWidth="1.200" /></Ico>
      <Ico w={9} h={10}><path d="M4.500 0v10M1 3h7M1 7h7" stroke="#666" strokeWidth="1.200" /></Ico>
      <Ico w={9} h={9}><circle cx="4.500" cy="4.500" r="3.800" fill="none" stroke="#bbb" strokeDasharray="1.500 1" /></Ico>
      <div className="flex items-center"><Ico w={10} h={10}><path d="M0 0h10L6 5v5H4V5z" fill="#d0d0d0" stroke="#777" strokeWidth="0.600" /></Ico><span>:0</span></div>
    </div>
  </div>
);

const TBAR_ICONS: React.ReactNode[] = [
  <Ico key="tv" w={15} h={13}><rect x="0" y="4" width="10" height="9" rx="1" fill="#5a5a5a" /><rect x="4" y="0" width="11" height="10" rx="1" fill="#d8d8d8" /></Ico>,
  <Ico key="wa" w={15} h={15}><circle cx="7" cy="8" r="6.500" fill="#fff" /><circle cx="7" cy="8" r="4" fill="#27a35a" /><path d="M5 6c0 3 2 4 4 4" stroke="#fff" fill="none" /><rect x="7" y="0" width="8" height="5" rx="2.500" fill="#444" /></Ico>,
  <Ico key="te" w={15} h={13}><rect x="0" y="3" width="9" height="9" rx="1" fill="#4b53bc" /><circle cx="11" cy="4" r="2.500" fill="#7b83eb" /><rect x="9" y="6" width="6" height="6" rx="2" fill="#7b83eb" /><path d="M2 5h5M4.500 5v5" stroke="#fff" /></Ico>,
  <Ico key="ch" w={16} h={16}><circle cx="7" cy="8.500" r="7" fill="#ea4335" /><path d="M7 8.500L.800 12A7 7 0 007 15.500z" fill="#34a853" /><path d="M7 8.500l6-3.500a7 7 0 01-6 10.500z" fill="#fbbc05" /><circle cx="7" cy="8.500" r="3" fill="#3d7ee8" stroke="#fff" /><circle cx="12" cy="3.500" r="3.500" fill="#0e7a65" /></Ico>,
  <Ico key="he" w={16} h={16}><circle cx="7" cy="9" r="6.500" fill="#2a8fd8" /><path d="M5 7c0-2 4-2 4 0 0 1.500-2 1.500-2 3M7 11.500v1" stroke="#fff" fill="none" /><circle cx="12" cy="4" r="4" fill="#f4b400" /></Ico>,
  <Ico key="fo" w={15} h={13}><path d="M0 1h6l2 2h7v10H0z" fill="#f6c644" /><rect x="3" y="8" width="9" height="3" fill="#2a8fd0" /></Ico>,
  <Ico key="st" w={14} h={14}><rect x="0" y="3" width="14" height="11" rx="1" fill="#f2f2f2" /><rect x="3" y="5" width="3.500" height="3" fill="#f25022" /><rect x="7.500" y="5" width="3.500" height="3" fill="#7fba00" /><rect x="3" y="9" width="3.500" height="3" fill="#00a4ef" /><rect x="7.500" y="9" width="3.500" height="3" fill="#ffb900" /></Ico>,
  <Ico key="di" w={15} h={15}><path d="M7.500 0l7.500 7.500L7.500 15 0 7.500z" fill="#e8403a" /><path d="M7.500 0v15L0 7.500z" fill="#f59024" /></Ico>,
  <Ico key="ed" w={15} h={15}><circle cx="7.500" cy="7.500" r="7" fill="#1c7fc4" /><path d="M1 8a7 7 0 0113 -2c-3-2-6-1-6 2 0 2 3 3 6 2" fill="#46c88a" /><circle cx="4.500" cy="10.500" r="3" fill="#aaa" /></Ico>,
  <Ico key="br" w={14} h={15}><circle cx="7" cy="7.500" r="6.800" fill="#f08a24" /><circle cx="7" cy="7.500" r="3.800" fill="#6a3cc0" /><circle cx="7" cy="7" r="1.500" fill="#f6e7b0" /></Ico>,
  <div key="rh" className="relative flex h-[15px] w-[15px] items-center justify-center bg-black">
    <Ico w={13} h={13}><path d="M1 12l2-7 4-3 4 2-3 2 2 4-3-2-3 1z" fill="#e8e8e8" /></Ico>
    <span className="absolute right-0 top-[-2px] text-[6.5px] text-white">7</span>
  </div>,
  <div key="ac" className="flex h-[15px] w-[14px] flex-col items-center bg-[#c4173b] text-[9px] font-bold leading-[10px] text-white">A<div className="h-[5px] w-full bg-[#7f0f2a]" /></div>,
  <div key="rv" className="flex h-[15px] w-[13px] flex-col items-center bg-[#2560d8] text-[9px] font-bold leading-[10px] text-white">R<div className="h-[5px] w-full bg-[#13316e]" /></div>,
  <Ico key="sn" w={15} h={15}><rect x="1" y="1" width="10" height="10" fill="#eee" stroke="#d8632a" strokeDasharray="2 1" /><path d="M6 12l8-4M7 9l5 5" stroke="#2a8fd0" strokeWidth="1.300" /></Ico>,
  <Ico key="ph" w={14} h={14}><rect width="14" height="14" rx="1" fill="#2a86d8" /><path d="M0 14l6-7 8 7z" fill="#174f8f" /><circle cx="10" cy="4" r="1.500" fill="#fff" /></Ico>,
  <Ico key="ou" w={16} h={14}><rect x="5" y="1" width="11" height="12" rx="1" fill="#28a8ea" /><rect x="0" y="3" width="9" height="9" rx="1" fill="#0f6cbd" /><circle cx="4.500" cy="7.500" r="2.200" fill="none" stroke="#fff" strokeWidth="1.200" /></Ico>,
  <Ico key="no" w={11} h={15}><rect width="11" height="15" fill="#57b7d8" /><rect y="13" width="11" height="2" fill="#d87a2a" /><path d="M2 4h7M2 7h7M2 10h7" stroke="#1b5f7a" /></Ico>,
];

const Taskbar = () => (
  <div className="flex h-[29px] shrink-0 items-center bg-[#1c1c1c] text-[#e8e8e8]">
    <div className="ml-[7px] flex h-[24px] w-[25px] shrink-0 items-center justify-center rounded-[2px] bg-[#2a2a2a]">
      <div className="flex h-[13px] w-[14px] gap-px"><div className="h-full flex-1 bg-white" /><div className="h-full flex-1 bg-[#2ea4e8]" /></div>
    </div>
    <Ico c="ml-[96px]" w={14} h={14}><rect width="6.700" height="6.700" fill="#38b6f0" /><rect x="7.300" width="6.700" height="6.700" fill="#1fa0e6" /><rect y="7.300" width="6.700" height="6.700" fill="#1fa0e6" /><rect x="7.300" y="7.300" width="6.700" height="6.700" fill="#0f86d4" /></Ico>
    <div className="ml-[9px] flex h-[18px] w-[130px] shrink-0 items-center rounded-full bg-[#f4f4f4] pl-[7px] font-['Noto_Sans',sans-serif] text-[8px] text-[#666]">
      <Ico w={9} h={9}><circle cx="3.800" cy="3.800" r="3" fill="none" stroke="#222" /><path d="M6 6l2.500 2.500" stroke="#222" /></Ico>
      <span className="ml-[5px]">Búsqueda</span>
    </div>
    <div className="ml-[2px] flex">
      {TBAR_ICONS.map((n, i) => (
        <div key={i} className="relative flex h-[29px] w-[26.375px] shrink-0 items-center justify-center">
          {i === 12 && <div className="absolute left-[1px] top-[2px] h-[25px] w-[24px] rounded-[2px] bg-[#2c2c2c]" />}
          <div className="relative flex">{n}</div>
          {i > 0 && ![4, 5, 6, 7].includes(i) && <div className={`absolute bottom-[1px] left-[10px] h-[2px] rounded-full ${i === 12 ? "w-[6px] bg-[#4cc2ff]" : "w-[4px] bg-[#9a9a9a]"}`} />}
        </div>
      ))}
    </div>
    <Ico c="ml-[39px]" w={8} h={5}><path d="M.500 4.500L4 1l3.500 3.500" stroke="#ddd" fill="none" strokeWidth="1.200" /></Ico>
    <Ico c="ml-[10px]" w={10} h={9}><path d="M1 6a2 2 0 012-3 3 3 0 015-1v5H2z" fill="#aaa" /><circle cx="7.500" cy="6.500" r="2.500" fill="#d42a2a" /></Ico>
    <Ico c="ml-[9px]" w={9} h={7}><path d="M.500 2.500a6 6 0 018 0M2 4.500a3.500 3.500 0 015 0" stroke="#ddd" fill="none" /><circle cx="4.500" cy="6" r="0.800" fill="#ddd" /></Ico>
    <Ico c="ml-[5px]" w={9} h={8}><path d="M0 2.500h1.500L4 .500v7l-2.500-2H0z" fill="none" stroke="#ddd" /><path d="M5.500 2.500l3 3M8.500 2.500l-3 3" stroke="#ddd" /></Ico>
    <Ico c="ml-[6px]" w={10} h={9}><path d="M1 4h2l2-3 1 1v2h3v4H1z" fill="none" stroke="#ddd" /></Ico>
    <div className="ml-[8px] flex w-[40px] shrink-0 flex-col items-end font-['Noto_Sans',sans-serif] text-[7px] leading-[10px] text-[#eee]">
      <span>12:47</span>
      <span>07/11/2024</span>
    </div>
    <Ico c="ml-[4px]" w={9} h={10}><path d="M1 1h7v6H4L2 9V7H1z" fill="#ddd" /><circle cx="5" cy="4" r="1.500" fill="#1c1c1c" /></Ico>
  </div>
);

export default function App() {
  return (
    <div className="relative flex h-[518px] w-[920px] flex-col overflow-hidden bg-[#c9c9c9] font-['Roboto',sans-serif] blur-[0.3px]">
      <div className="flex h-[478px] shrink-0">
        <div className="w-[1px] shrink-0" />
        <div className="flex w-[908px] shrink-0 flex-col overflow-hidden rounded-tr-[3px] bg-[#f5f5f5] shadow-[0_1px_3px_rgba(0,0,0,0.35)]">
          <TitleBar />
          <RibbonTabs />
          <Ribbon />
          <OptionsBar />
          <div className="flex min-h-0 flex-1">
            <div className="flex w-[165px] shrink-0 flex-col">
              <Properties />
              <Browser />
            </div>
            <div className="w-[2px] shrink-0 bg-[#e2e2e2]" />
            <div className="flex min-w-0 flex-1 flex-col">
              <DocTabs />
              <div className="relative min-h-0 flex-1 bg-white">
                <div className="flex h-full">
                  <div className="flex min-w-0 flex-1 flex-col">
                    <div className="relative min-h-0 flex-1 overflow-hidden">
                      <Model />
                      <ViewCube />
                      <NavBar />
                      <SunMenu />
                    </div>
                    <ViewBar />
                  </div>
                  <div className="flex w-[10px] shrink-0 flex-col items-center bg-[#ececec] pt-[3px]">
                    <Ico w={6} h={4}><path d="M.500 3.500L3 1l2.500 2.500" stroke="#888" fill="none" /></Ico>
                    <div className="mt-[158px] h-[10px] w-[4px] rounded-[2px] bg-[#d4d4d4]" />
                    <Ico c="mb-[15px] mt-auto" w={6} h={4}><path d="M.500 .500L3 3l2.500-2.500" stroke="#888" fill="none" /></Ico>
                  </div>
                </div>
              </div>
            </div>
          </div>
          <StatusBar />
        </div>
        <div className="relative flex-1 bg-[#f3f3f3]">
          <svg width={11} height={120} viewBox="0 0 11 120" className="absolute left-0 top-[200px]">
            <path d="M0 7c4 0 7-1 11-2M0 20c5 10 1 60 11 95" stroke="#9a9a9a" fill="none" />
          </svg>
        </div>
      </div>
      <div className="h-[11px] shrink-0 bg-gradient-to-b from-[#d4d4d4] to-[#bcbcbc]" />
      <Taskbar />
    </div>
  );
}
